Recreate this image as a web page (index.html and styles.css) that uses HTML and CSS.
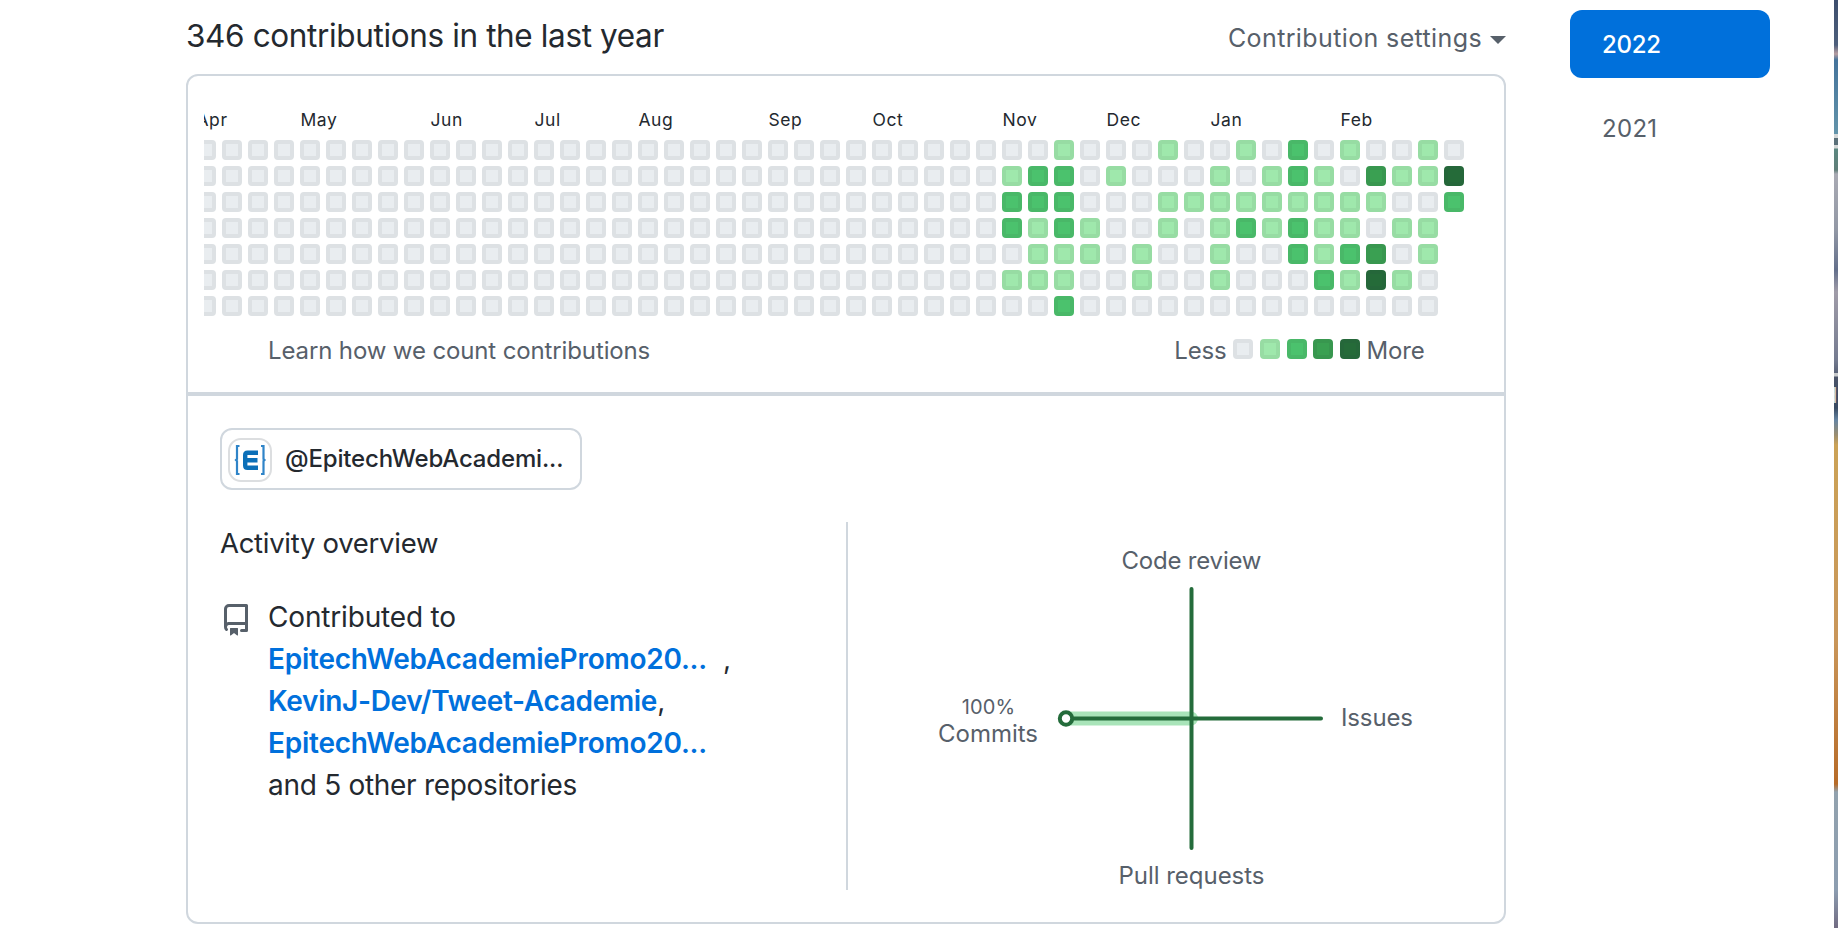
FILE: index.html
```html
<!DOCTYPE html>
<html lang="en">
<head>
<meta charset="utf-8">
<title>Contributions</title>
<link rel="stylesheet" href="styles.css">
</head>
<body>
<div class="page">
  <main class="main">
    <header class="head">
      <h2 class="title"><span>346 contributions in the last year</span></h2>
      <div class="settings"><span class="settings-text">Contribution settings</span><i class="caret"></i></div>
    </header>
    <section class="box">
      <div class="calendar">
        <div class="months" id="months"></div>
        <div class="weeks" id="weeks"></div>
      </div>
      <div class="foot">
        <span class="learn">Learn how we count contributions</span>
        <div class="legend"><span class="less">Less</span><i class="day l0"></i><i class="day l1"></i><i class="day l2"></i><i class="day l3"></i><i class="day l4"></i><span class="more">More</span></div>
      </div>
      <div class="activity">
        <div class="org">
          <svg class="avatar" width="44" height="44" viewBox="0 0 44 44"><rect x="1" y="1" width="42" height="42" rx="12" fill="#fff" stroke="#dcdee0" stroke-width="2"/><path d="M11.500 8H9V21L8 22L9 23V36H11.500M33 8H35.500V21L36.500 22L35.500 23V36H33" fill="none" stroke="#2f84c8" stroke-width="2.200"/><path d="M30 14.700H19.500Q17.200 14.700 17.200 17V27.400Q17.200 29.700 19.500 29.700H30M17 22.200H29.500" fill="none" stroke="#0b6fb8" stroke-width="4.400"/></svg>
          <span class="org-name">@EpitechWebAcademi...</span>
        </div>
        <div class="columns">
          <div class="overview">
            <h4 class="subtitle"><span>Activity overview</span></h4>
            <div class="contributed">
              <svg class="repo" width="32" height="32" viewBox="0 0 16 16" fill="#57606a"><path fill-rule="evenodd" d="M2 2.500A2.500 2.500 0 014.500 0h8.750a.75.75 0 01.75.75v12.500a.75.75 0 01-.75.75h-2.500a.75.75 0 110-1.500h1.750v-2h-8a1 1 0 00-.714 1.700.75.75 0 01-1.072 1.050A2.495 2.495 0 012 11.500v-9zm10.500-1V9h-8c-.356 0-.694.074-1 .208V2.500a1 1 0 011-1h8zM5 12.250v3.250a.25.25 0 00.4.2l1.450-1.087a.25.25 0 01.3 0L8.600 15.700a.25.25 0 00.4-.2v-3.250a.25.25 0 00-.25-.25h-3.500a.25.25 0 00-.25.25z"/></svg>
              <div class="repos">
                <div><span class="t-contrib">Contributed to</span></div>
                <div><a class="link">EpitechWebAcademiePromo20...</a><span class="far">,</span></div>
                <div><a class="link tight">KevinJ-Dev/Tweet-Academie</a><span>,</span></div>
                <div><a class="link">EpitechWebAcademiePromo20...</a></div>
                <div><span class="t-others">and 5 other repositories</span></div>
              </div>
            </div>
          </div>
          <svg class="graph" width="656" height="368" viewBox="848 522 656 368">
            <path d="M1066 718.500H1191" stroke="#40c463" stroke-opacity=".45" stroke-width="14" fill="none"/>
            <path d="M1191 711.500a7 7 0 0 1 7 7a7 7 0 0 1 -7 7z" fill="#40c463" fill-opacity=".45"/>
            <path d="M1066 718.500H1321M1191.500 589V848" stroke="#246c3b" stroke-width="4" stroke-linecap="round"/>
            <circle cx="1066" cy="718.500" r="6.200" fill="#fff" stroke="#246c3b" stroke-width="4"/>
            <g class="labels" text-anchor="middle">
              <text x="1191.500" y="569" textLength="140">Code review</text>
              <text x="1191.500" y="884" textLength="146">Pull requests</text>
              <text x="988" y="742" textLength="100">Commits</text>
              <text x="1377" y="726" textLength="72">Issues</text>
              <text class="pct" x="988.500" y="714" textLength="53.500">100%</text>
            </g>
          </svg>
        </div>
      </div>
    </section>
  </main>
  <nav class="years">
    <a class="year current"><span>2022</span></a>
    <a class="year"><span>2021</span></a>
  </nav>
  <div class="strip"><span class="glyph">d</span></div>
</div>
<script src="calendar.js"></script>
</body>
</html>
```

FILE: calendar.js
```js
// One string per week, Sunday first; each digit is a contribution level.
const recent = [
  "0122010", "0221110", "1222112", "0001100", "0100000", "0000110",
  "1011000", "0010000", "0111110", "1012000", "0111000", "2212200",
  "0111120", "1011210", "0310340", "0101010", "1101100", "042"
];
const weeks = Array(31).fill("0000000").concat(recent);
document.getElementById("weeks").innerHTML = weeks.map(w =>
  '<div class="week">' + [...w].map(l => `<i class="day l${l}"></i>`).join("") + "</div>").join("");

// Month name and the number of weeks it spans.
const months = [["Apr", 4], ["May", 5], ["Jun", 4], ["Jul", 4], ["Aug", 5], ["Sep", 4],
  ["Oct", 5], ["Nov", 4], ["Dec", 4], ["Jan", 5], ["Feb", 4]];
document.getElementById("months").innerHTML = months.map(([name, span]) =>
  `<span class="month span${span}">${name}</span>`).join("");
```

FILE: styles.css
```css
* { box-sizing: border-box; }
body { margin: 0; background: #fff; color: #24292f; font-family: Inter, "Liberation Sans", sans-serif; overflow: hidden; }
.page { display: flex; width: 1838px; height: 928px; padding-left: 186px; overflow: hidden; }
.main { width: 1320px; flex: none; }
.head { display: flex; justify-content: space-between; height: 74px; }
.title { margin: 0; padding-top: 12px; font-size: 31.5px; font-weight: 400; line-height: 48px; letter-spacing: -.37px; white-space: nowrap; }
.settings { display: flex; align-items: center; gap: 8px; height: 42px; margin-top: 17px; color: #57606a; font-size: 25px; letter-spacing: .38px; white-space: nowrap; }
.caret { border: 8px solid transparent; border-top-color: #57606a; border-bottom: 0; margin-top: 3px; }
.box { height: 850px; border: 2px solid #d0d7de; border-radius: 12px; }
.calendar { margin-left: 16px; padding-top: 30px; height: 240px; width: 1290px; overflow: hidden; }
.months { display: flex; height: 34px; margin-left: -7.5px; line-height: 28px; font-size: 17.5px; letter-spacing: .55px; }
.month { flex: none; }
.span4 { width: 104px; }
.span5 { width: 130px; }
.weeks { display: flex; gap: 6px; margin-left: -8px; }
.week { display: flex; flex-direction: column; gap: 6px; flex: none; }
.day { display: block; width: 20px; height: 20px; border-radius: 4px; border: 4px solid; }
.l0 { background: #e9edf0; border-color: #dde1e4; }
.l1 { background: #9fe8ac; border-color: #97dca3; }
.l2 { background: #4bc26d; border-color: #49b868; }
.l3 { background: #3aa052; border-color: #38974f; }
.l4 { background: #256b39; border-color: #25673a; }
.foot { display: flex; justify-content: space-between; height: 76px; padding: 15px 79.5px 0 80px; line-height: 40px; color: #57606a; font-size: 24px; white-space: nowrap; }
.learn { letter-spacing: -.13px; }
.legend { display: flex; height: 40px; align-items: center; gap: 6.7px; }
.legend .day { margin-top: -4px; }
.less, .more { letter-spacing: -.2px; }
.activity { border-top: 4px solid #d0d7de; padding: 32px; }
.org { display: flex; align-items: center; width: 362px; height: 62px; padding-left: 6px; gap: 13px; border: 2px solid #d0d7de; border-radius: 12px; font-size: 24px; font-weight: 500; letter-spacing: -.16px; white-space: nowrap; }
.org-name { margin-top: -2px; }
.avatar { flex: none; margin-top: 2px; }
.columns { display: flex; margin-top: 32px; height: 368px; }
.overview { width: 628px; flex: none; border-right: 2px solid #d0d7de; }
.subtitle { margin: 0; font-weight: 400; font-size: 27.5px; line-height: 42px; letter-spacing: -.29px; }
.contributed { display: flex; margin-top: 32px; gap: 16px; font-size: 28px; line-height: 42px; white-space: nowrap; }
.repo { margin-top: 8px; flex: none; }
.t-contrib { letter-spacing: -.17px; }
.t-others { letter-spacing: -.29px; }
.link { color: #0070dc; font-weight: 600; letter-spacing: -.24px; }
.tight { letter-spacing: -.3px; }
.far { margin-left: 16px; }
.graph { flex: none; }
.labels { fill: #57606a; font-size: 24px; }
.pct { font-size: 20px; }
.years { width: 200px; margin: 10px 0 0 64px; flex: none; }
.year { display: block; height: 68px; margin-bottom: 16px; padding-left: 32px; line-height: 70px; border-radius: 12px; font-size: 24px; letter-spacing: .3px; color: #57606a; }
.current { background: #0070db; color: #fff; font-weight: 500; letter-spacing: -.3px; }
.strip { width: 4px; height: 928px; margin-left: 64px; flex: none; overflow: hidden; position: relative; background: linear-gradient(#3d4e6d 0, #4d5f7c 45px, #b79da1 54px, #44739b 60px, #6394aa 134px, #d5d8d8 134px, #d5d8d8 138px, #5b7079 138px, #5b7079 145px, #d5d8d8 145px, #d5d8d8 148px, #5b8780 149px, #607e78 170px, #a9aab3 174px, #9298a5 230px, #636f8b 270px, #a09ca8 292px, #747b90 360px, #5a6378 373px, #c8cacc 373px, #c8cacc 376px, #4a5368 377px, #394b63 408px, #6584a2 420px, #9a8d70 435px, #cba256 445px, #c9965a 640px, #b76b28 784px, #92a2ae 792px, #8c9db0 890px, #716b82 928px); }
.glyph { position: absolute; left: -10px; top: 380px; font-size: 22px; line-height: 30px; color: #d5d8d8; }
```
